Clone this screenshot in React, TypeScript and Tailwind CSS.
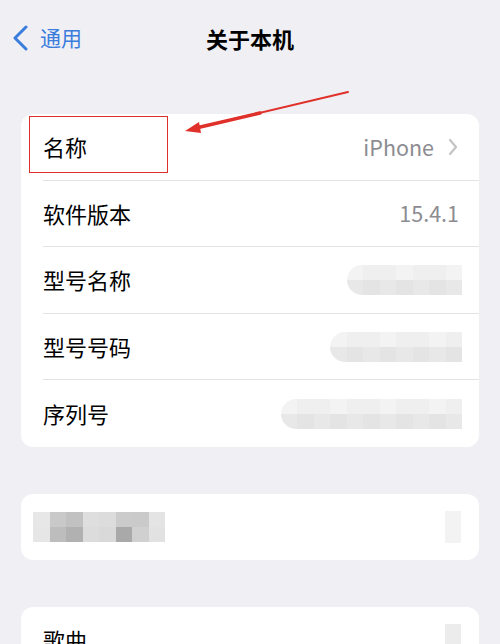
const FONT = { fontFamily: '"Noto Sans CJK SC", "Noto Sans", sans-serif' };

type Tile = string[];

function Mosaic({ cols, rounded }: { cols: Tile[]; rounded?: boolean }) {
  return (
    <div className={`flex overflow-hidden ${rounded ? "rounded-l-full" : ""}`}>
      {cols.map((c, i) => (
        <div key={i} className="flex flex-col">
          {c.map((bg, j) => (
            <div key={j} className="w-[16.5px] h-[15px]" style={{ background: bg }} />
          ))}
        </div>
      ))}
    </div>
  );
}

const light = (n: number): Tile[] =>
  Array.from({ length: n }, (_, i) => [
    i % 3 === 0 ? "#f3f3f3" : "#efefef",
    i % 2 === 0 ? "#e8e8e8" : "#e4e4e4",
  ]);

function Row({
  label,
  value,
  chevron,
  blur,
  last,
}: {
  label: string;
  value?: string;
  chevron?: boolean;
  blur?: number;
  last?: boolean;
}) {
  const pr = chevron ? "pr-[21px]" : blur ? "pr-[17px]" : "pr-[20px]";
  return (
    <div className="flex h-[66.6px] items-center pl-[22px]">
      <div
        className={`flex h-full flex-1 items-center justify-between ${pr} ${
          last ? "" : "border-b border-[#e3e3e6]"
        }`}
      >
        <span className="text-[22px] text-black">{label}</span>
        <div className="flex items-center gap-[14px]">
          {value && <span className="text-[21.5px] text-[#8c8c91]">{value}</span>}
          {blur ? <Mosaic cols={light(blur)} rounded /> : null}
          {chevron && (
            <svg width="10" height="18" viewBox="0 0 10 18">
              <path d="M2 2 L8 9 L2 16" fill="none" stroke="#c4c4c7" strokeWidth="2.2" strokeLinecap="round" strokeLinejoin="round" />
            </svg>
          )}
        </div>
      </div>
    </div>
  );
}

export default function App() {
  const dark: Tile[] = [
    ["#e7e7e7", "#e6e6e6"],
    ["#c9c9c9", "#bdbdbd"],
    ["#c1c1c1", "#b1b1b1"],
    ["#dedede", "#dcdcdc"],
    ["#dcdcdc", "#d9d9d9"],
    ["#cbcbcb", "#a9a9a9"],
    ["#cacaca", "#d0d0d0"],
    ["#e4e4e4", "#e2e2e2"],
  ];

  return (
    <div className="relative h-[644px] w-[500px] overflow-hidden bg-[#efeff4]" style={FONT}>
      <div className="relative flex h-[76px] items-center">
        <div className="flex items-center gap-[10px] pl-[12px]">
          <svg width="18" height="26" viewBox="0 0 18 26">
            <path d="M14 2 L3 13 L14 24" fill="none" stroke="#3b7ddd" strokeWidth="3" strokeLinecap="round" strokeLinejoin="round" />
          </svg>
          <span className="text-[21px] text-[#3b7ddd]">通用</span>
        </div>
        <span className="absolute left-1/2 -translate-x-1/2 text-[22px] font-bold text-black">关于本机</span>
      </div>

      <div className="mt-[38px] flex flex-col gap-[47px] px-[21px]">
        <div className="overflow-hidden rounded-[12px] bg-white">
          <Row label="名称" value="iPhone" chevron />
          <Row label="软件版本" value="15.4.1" />
          <Row label="型号名称" blur={7} />
          <Row label="型号号码" blur={8} />
          <Row label="序列号" blur={11} last />
        </div>

        <div className="flex h-[66px] items-center justify-between rounded-[12px] bg-white pl-[12px] pr-[18px]">
          <Mosaic cols={dark} />
          <div className="h-[32px] w-[16px] bg-[#f3f3f3]" />
        </div>

        <div className="flex h-[66px] items-center justify-between rounded-[12px] bg-white pl-[22px] pr-[18px]">
          <span className="text-[22px] text-black">歌曲</span>
          <div className="h-[32px] w-[16px] bg-[#ececec]" />
        </div>
      </div>

      <div className="absolute left-[29px] top-[116px] h-[57px] w-[139px] border-[1.5px] border-[#df2f2a]" />

      <svg className="absolute left-0 top-0" width="500" height="644" viewBox="0 0 500 644">
        <path d="M348 92 L196 128" stroke="#e0302a" strokeWidth="2" fill="none" strokeLinecap="round" />
        <path d="M260 113 L196 128" stroke="#e0302a" strokeWidth="3.5" fill="none" strokeLinecap="round" />
        <path d="M185 131 L199 122 L201 133 Z" fill="#e0302a" />
      </svg>
    </div>
  );
}
